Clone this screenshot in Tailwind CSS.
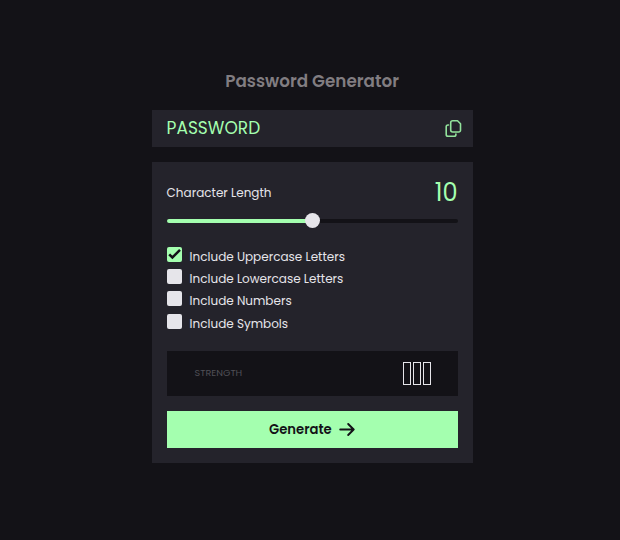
<!DOCTYPE html>
<html lang="en">
<head>
<meta charset="utf-8">
<title>Password Generator</title>
<script src="https://cdn.jsdelivr.net/npm/@tailwindcss/browser@4"></script>
</head>
<body class="bg-[#131217] w-[620px] h-[540px] overflow-hidden font-[Poppins,Inter,sans-serif] text-[#e6e5ea]">
<main class="ml-[151.6px] w-[321px] pt-[69px]">
  <h1 class="h-[41px] leading-[25px] text-center whitespace-nowrap font-semibold text-[16.8px] text-[#817d81]"><span>Password Generator</span></h1>
  <div class="h-[37px] bg-[#24232b] flex items-center justify-between pl-[15px] pr-[10.5px]">
    <span class="text-[17px] text-[#a4ffaf]">PASSWORD</span>
    <svg class="w-[17px] h-[19px]" viewBox="0 0 17 19" fill="none" stroke="#92e39c" stroke-width="1.6" stroke-linejoin="round" stroke-linecap="round"><path d="M7.700 1.700h4.800l3 3v6.500a1.800 1.800 0 0 1-1.800 1.800H7.700a2 2 0 0 1-2-2V3.700a2 2 0 0 1 2-2z"/><path d="M3.500 6H3a1.800 1.800 0 0 0-1.800 1.800v7.600a1.800 1.800 0 0 0 1.800 1.800h6.100a1.800 1.800 0 0 0 1.800-1.800V15"/></svg>
  </div>
  <section class="mt-[15px] h-[301px] bg-[#24232b] px-[15px] pt-[15px]">
    <div class="h-[30px] flex items-center justify-between">
      <span class="pt-px text-[12px]">Character Length</span>
      <span class="pt-[2px] text-[24px] leading-[30px] text-[#a4ffaf]">10</span>
    </div>
    <div class="mt-[11.500px] h-[4.500px] rounded-full bg-[#131217] relative">
      <div class="h-full w-1/2 rounded-full bg-[#a4ffaf]"></div>
      <div class="absolute left-[138px] -top-[5.500px] size-[15px] rounded-full bg-[#e6e5ea]"></div>
    </div>
    <div class="mt-[24px] h-[89px] flex flex-col text-[12px]">
      <div class="h-[22.200px] flex items-start gap-[8px]"><span class="size-[15px] rounded-[2px] bg-[#a4ffaf]"><svg class="size-[15px]" viewBox="0 0 15 15" fill="none" stroke="#131217" stroke-width="2.500"><path d="M2.200 7.300l3.200 3.200 7.600-7.700"/></svg></span><span class="leading-[19px]">Include Uppercase Letters</span></div>
      <div class="h-[22.200px] flex items-start gap-[8px]"><span class="size-[15px] rounded-[2px] bg-[#e6e5ea]"></span><span class="leading-[19px]">Include Lowercase Letters</span></div>
      <div class="h-[22.200px] flex items-start gap-[8px]"><span class="size-[15px] rounded-[2px] bg-[#e6e5ea]"></span><span class="leading-[19px]">Include Numbers</span></div>
      <div class="h-[22.200px] flex items-start gap-[8px]"><span class="size-[15px] rounded-[2px] bg-[#e6e5ea]"></span><span class="leading-[19px]">Include Symbols</span></div>
    </div>
    <div class="mt-[15px] h-[45px] bg-[#131217] flex items-center justify-between pl-[28px] pr-[26.500px]">
      <span class="pb-px text-[9.600px] text-[#504f56]">STRENGTH</span>
      <div class="flex gap-[2px]"><i class="w-[8px] h-[23px] border border-[#e6e5ea]"></i><i class="w-[8px] h-[23px] border border-[#e6e5ea]"></i><i class="w-[8px] h-[23px] border border-[#e6e5ea]"></i></div>
    </div>
    <button class="mt-[15px] w-full h-[37px] bg-[#a4ffaf] text-[#131217] flex items-center justify-center gap-[7.500px] text-[13.200px] font-semibold"><span class="pt-px">Generate</span>
      <svg class="w-[16px] h-[15px]" viewBox="0 0 16 15" fill="none" stroke="#131217" stroke-width="1.900" stroke-linecap="round" stroke-linejoin="round"><path d="M1.200 7.500h13.500M9.200 2l5.500 5.500L9.200 13"/></svg>
    </button>
  </section>
</main>
</body>
</html>
